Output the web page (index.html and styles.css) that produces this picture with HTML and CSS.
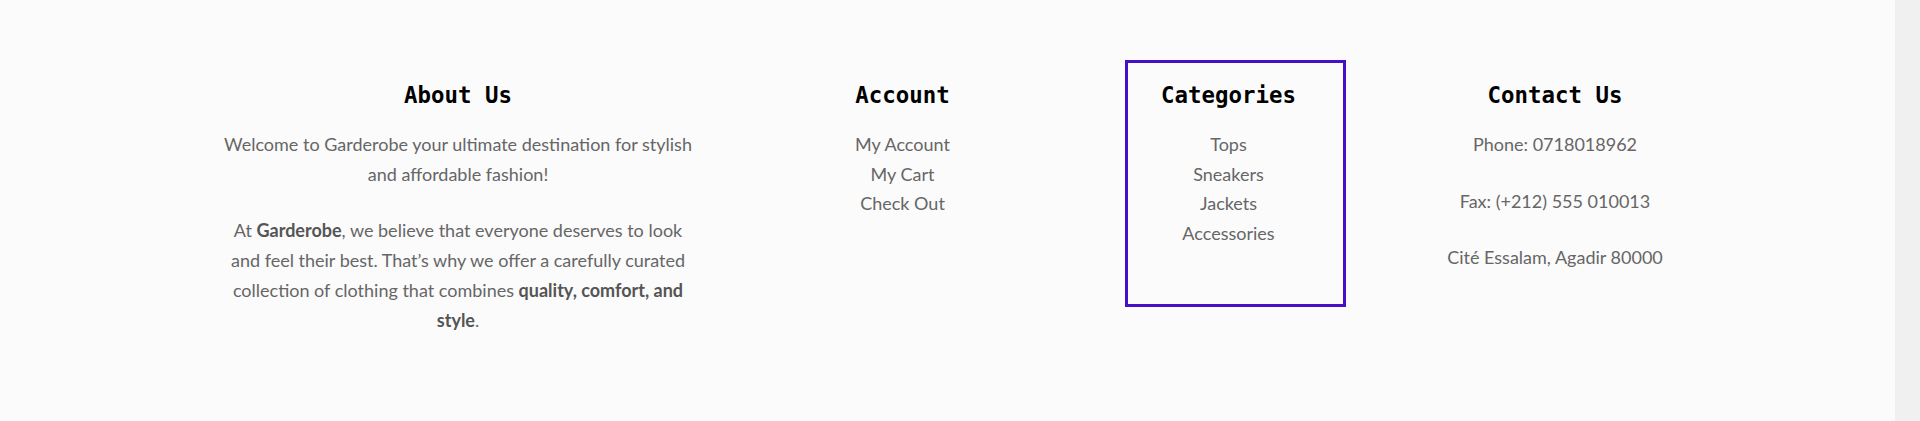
FILE: index.html
```html
<!DOCTYPE html>
<html lang="en">
<head>
<meta charset="utf-8">
<title>Garderobe Footer</title>
<link rel="stylesheet" href="styles.css">
</head>
<body>
<div class="page">
  <footer class="footer">
    <section class="col col-about">
      <h3 class="col-title">About Us</h3>
      <p class="col-text">Welcome to Garderobe your ultimate destination for stylish and affordable fashion!</p>
      <p class="col-text">At <strong>Garderobe</strong>, we believe that everyone deserves to look and feel their best. That’s why we offer a carefully curated collection of clothing that combines <strong>quality, comfort, and style</strong>.</p>
    </section>
    <section class="col col-account">
      <h3 class="col-title">Account</h3>
      <ul class="col-list">
        <li><a href="#">My Account</a></li>
        <li><a href="#">My Cart</a></li>
        <li><a href="#">Check Out</a></li>
      </ul>
    </section>
    <section class="col col-categories is-active">
      <h3 class="col-title">Categories</h3>
      <ul class="col-list">
        <li><a href="#">Tops</a></li>
        <li><a href="#">Sneakers</a></li>
        <li><a href="#">Jackets</a></li>
        <li><a href="#">Accessories</a></li>
      </ul>
    </section>
    <section class="col col-contact">
      <h3 class="col-title">Contact Us</h3>
      <p class="col-text">Phone: 0718018962</p>
      <p class="col-text">Fax: (+212) 555 010013</p>
      <p class="col-text">Cité Essalam, Agadir 80000</p>
    </section>
  </footer>
  <div class="scrollbar"></div>
</div>
</body>
</html>
```
FILE: styles.css
```css
html, body {
  margin: 0;
  padding: 0;
}

body {
  font-family: Lato, "Open Sans", sans-serif;
  font-size: 18px;
  color: #666666;
  background: #fbfbfb;
}

.page {
  display: flex;
  height: 421px;
  overflow: hidden;
}

.footer {
  flex: 1;
  display: flex;
  align-items: flex-start;
  padding: 60px 0 0 215px;
  background: #fbfbfb;
}

.scrollbar {
  width: 25px;
  flex: 0 0 25px;
  background: #f0f0f0;
}

.col {
  box-sizing: border-box;
  border: 3px solid transparent;
  padding: 19px 0 55px;
  text-align: center;
}

.col-about {
  width: 486px;
}

.col-account {
  width: 200px;
  margin-left: 101.5px;
}

.col-categories {
  width: 221px;
  margin-left: 122.5px;
  padding-left: 10px;
  padding-right: 24px;
}

.col-contact {
  width: 260px;
  margin-left: 79px;
}

.is-active {
  border-color: #4510c6;
}

.col-title {
  margin: 0 0 22px;
  font-family: "DejaVu Sans Mono", "Liberation Mono", monospace;
  font-size: 22.4px;
  font-weight: bold;
  line-height: 26px;
  color: #000000;
}

.col-text {
  margin: 0 0 27px;
  line-height: 29.7px;
}

.col-text:last-child {
  margin-bottom: 0;
}

.col-text strong {
  color: #555555;
  font-weight: bold;
}

.col-list {
  list-style: none;
  margin: 0;
  padding: 0;
  line-height: 29.7px;
}

.col-list a {
  color: #666666;
  text-decoration: none;
}
```
